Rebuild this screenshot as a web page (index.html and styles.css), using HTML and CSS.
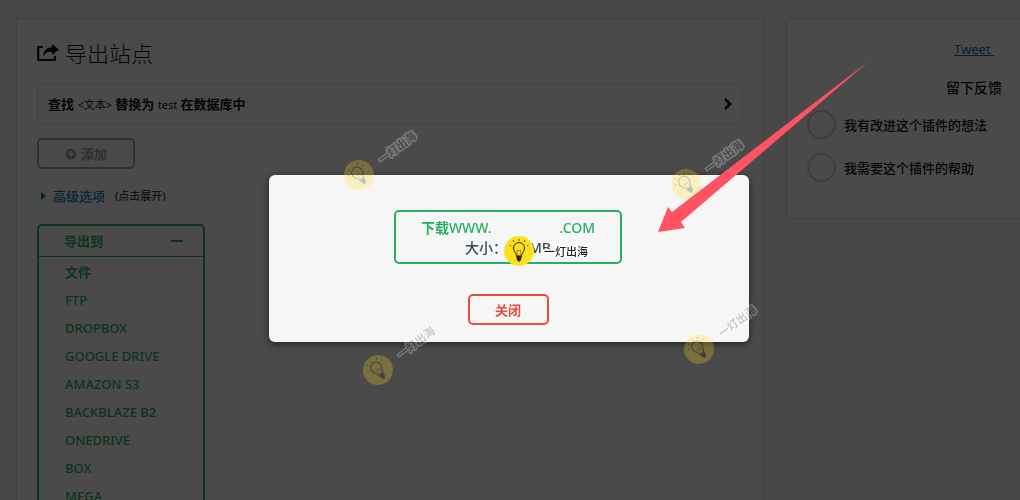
FILE: index.html
```html
<!DOCTYPE html>
<html lang="zh-CN">

<head>
  <meta charset="UTF-8">
  <meta name="viewport" content="width=device-width, initial-scale=1.0">
  <title>导出站点</title>
  <link rel="stylesheet" href="styles.css">
</head>

<body>
  <div class="container">
    <main class="panel export">
      <h1>
        <svg class="share-icon" width="22" height="18" viewBox="0 0 22 18" aria-hidden="true">
          <path d="M6 3H1.200V16H18V12" fill="none" stroke="currentColor" stroke-width="2.200" />
          <path d="M15 0L22 5.500L15 11V7.800C11 7.600 8 9 6 12.500C6.300 7 9.500 3.500 15 3.200Z" fill="currentColor" />
        </svg>
        导出站点
      </h1>

      <button class="replace-row" type="button">
        <span>查找 <small>&lt;文本&gt;</small> 替换为 <small>test</small> 在数据库中</span>
        <svg width="10" height="12" viewBox="0 0 10 12" aria-hidden="true">
          <path d="M3 1L8 6L3 11" fill="none" stroke="currentColor" stroke-width="2.600" />
        </svg>
      </button>

      <button class="button add" type="button">
        <svg width="12" height="12" viewBox="0 0 12 12" aria-hidden="true">
          <circle cx="6" cy="6" r="5.500" fill="currentColor" />
          <path d="M6 3V9M3 6H9" stroke="#f9f9f9" stroke-width="1.600" />
        </svg>
        添加
      </button>

      <details class="advanced">
        <summary><a href="#">高级选项</a> <small>(点击展开)</small></summary>
      </details>

      <div class="export-to">
        <button class="export-head" type="button">导出到 <span class="minus"></span></button>
        <ul>
          <li><a class="file" href="#">文件</a></li>
          <li><a href="#">FTP</a></li>
          <li><a href="#">DROPBOX</a></li>
          <li><a href="#">GOOGLE DRIVE</a></li>
          <li><a href="#">AMAZON S3</a></li>
          <li><a href="#">BACKBLAZE B2</a></li>
          <li><a href="#">ONEDRIVE</a></li>
          <li><a href="#">BOX</a></li>
          <li><a href="#">MEGA</a></li>
        </ul>
      </div>
    </main>

    <aside class="panel feedback">
      <a class="tweet" href="#">Tweet&nbsp;</a>
      <h2>留下反馈</h2>
      <label><input type="radio" name="feedback"> 我有改进这个插件的想法</label>
      <label><input type="radio" name="feedback"> 我需要这个插件的帮助</label>
    </aside>
  </div>

  <div class="overlay">
    <div class="modal" role="dialog">
      <a class="button download" href="#">
        <span><b>下载</b>WWW.<i class="blank-name"></i>.COM</span>
        <span class="size">大小：<i class="blank-size"></i>MB</span>
      </a>
      <button class="button close" type="button">关闭</button>
    </div>
  </div>

  <svg class="marks" width="1020" height="500" viewBox="0 0 1020 500">
    <defs>
      <g id="bulb">
        <circle r="15" fill="#ffe01e" />
        <g fill="none" stroke="#2a2616" stroke-width="1">
          <path d="M-2.500 5C-2.500 2-5.500 1-5.500-3A5.500 5.500 0 0 1 5.500-3C5.500 1 2.500 2 2.500 5Z" />
          <path d="M-1 5L-2-1L0 0L2-1L1 5" stroke-width=".4" />
          <path d="M0-10V-12M-5-9L-6-11M5-9L6-11M-8-5L-9.500-6M8-5L9.500-6" stroke-width=".8" />
        </g>
        <path d="M-2.800 5H2.800L2 9L0 11L-2 9Z" fill="#2a2616" />
      </g>
      <g id="mark">
        <use href="#bulb" />
        <text class="mark-text" x="25" y="5">一灯出海</text>
      </g>
    </defs>
    <use href="#mark" class="faded" transform="translate(359 175) rotate(-37)" />
    <use href="#mark" class="faded" transform="translate(686 184) rotate(-37)" />
    <use href="#mark" class="faded" transform="translate(378 370) rotate(-37)" />
    <use href="#mark" class="faded" transform="translate(699 349) rotate(-37)" />
    <use href="#mark" transform="translate(519 251)" />
    <path d="M869 61L672 212L668 207L658 232L685 228L681 222Z" fill="#ff5364" />
  </svg>
</body>

</html>
```

FILE: styles.css
```css
* {
  box-sizing: border-box;
}

body {
  height: 100vh;
  margin: 0;
  background-color: #f1f1f1;
  color: #111;
  font-family: "Noto Sans", "Noto Sans CJK SC", sans-serif;
  font-size: 13px;
  line-height: 20px;
  overflow: hidden;
}

button {
  font: inherit;
  color: inherit;
  cursor: pointer;
}

small {
  font-size: 11px;
  font-weight: 400;
}

/* the feedback column runs past the right edge of the window */
.container {
  display: flex;
  align-items: flex-start;
  gap: 22px;
  margin: 18px -142px 0 16px;
}

.panel {
  background-color: #f9f9f9;
  border: 1px solid #d6d6d6;
  border-radius: 3px;
  padding: 20px;
}

.export {
  flex: 1;
}

h1 {
  display: flex;
  align-items: center;
  gap: 6px;
  margin: 0 0 16px;
  font-size: 22px;
  font-weight: 300;
  line-height: 28px;
}

.replace-row {
  display: flex;
  justify-content: space-between;
  align-items: center;
  width: 100%;
  height: 42px;
  padding: 0 10px;
  background: none;
  border: 1px solid #d6d6d6;
  border-radius: 5px;
  font-weight: 600;
}

.button {
  display: flex;
  justify-content: center;
  align-items: center;
  background: none;
  border: 2px solid;
  border-radius: 5px;
  font-weight: 600;
  text-decoration: none;
}

.add {
  gap: 4px;
  width: 98px;
  height: 31px;
  margin: 13px 0 17px;
  color: #95a5a6;
}

.advanced summary {
  display: flex;
  align-items: center;
  gap: 10px;
  padding-left: 4px;
  list-style: none;
}

.advanced summary::before {
  content: "";
  margin-right: -3px;
  border: 4px solid transparent;
  border-left: 5px solid #0074a2;
  border-right: 0;
}

.advanced a {
  color: #0085ba;
  font-weight: 500;
  text-decoration: none;
}

.export-to {
  width: 168px;
  margin-top: 18px;
  border: 2px solid #27ae60;
  border-radius: 5px;
  color: #27ae60;
}

.export-head {
  display: flex;
  justify-content: space-between;
  align-items: center;
  width: 100%;
  height: 31px;
  padding: 0 20px 0 25px;
  background: none;
  border: 0;
  border-bottom: 1px solid #27ae60;
  font-weight: 600;
}

.minus {
  width: 12px;
  height: 2px;
  background-color: #27ae60;
}

.export-to ul {
  margin: 0;
  padding: 1px 26px;
  list-style: none;
}

.export-to li a {
  display: block;
  height: 28px;
  color: inherit;
  font-weight: 500;
  line-height: 28px;
  text-decoration: none;
}

.export-to li .file {
  font-weight: 600;
}

.feedback {
  display: flex;
  flex-direction: column;
  width: 376px;
  min-height: 201px;
}

.tweet {
  align-self: center;
  color: #0073aa;
}

h2 {
  margin: 19px 0 12px;
  font-size: 14px;
  font-weight: 500;
  line-height: 20px;
  text-align: center;
}

.feedback label {
  display: flex;
  align-items: center;
  gap: 8px;
  margin-bottom: 14px;
  font-weight: 500;
}

.feedback input {
  appearance: none;
  width: 29px;
  height: 29px;
  margin: 0;
  border: 2px solid #ccc;
  border-radius: 50%;
}

.overlay {
  position: fixed;
  inset: 0;
  display: flex;
  justify-content: center;
  align-items: flex-start;
  padding: 35vh 2px 0 0;
  background-color: rgba(0, 0, 0, 0.7);
}

.modal {
  display: flex;
  flex-direction: column;
  align-items: center;
  gap: 30px;
  width: 480px;
  padding: 35px 22px 17px 20px;
  background-color: #f6f6f6;
  border-radius: 6px;
  box-shadow: 0 2px 8px rgba(0, 0, 0, 0.6);
}

.download {
  flex-direction: column;
  width: 228px;
  padding: 6px 0 4px;
  color: #27ae60;
  font-size: 14px;
  font-weight: 500;
}

.download b {
  font-weight: 600;
}

.size {
  color: #34495e;
}

.blank-name {
  display: inline-block;
  width: 68px;
}

.blank-size {
  display: inline-block;
  width: 22px;
}

.close {
  width: 81px;
  height: 31px;
  color: #e74c3c;
}

.marks {
  position: fixed;
  top: 0;
  left: 0;
  pointer-events: none;
}

.mark-text {
  fill: #222;
  stroke: #fff;
  stroke-width: 3px;
  paint-order: stroke;
  font-size: 11px;
  font-weight: 500;
}

.faded {
  opacity: 0.25;
}
```
